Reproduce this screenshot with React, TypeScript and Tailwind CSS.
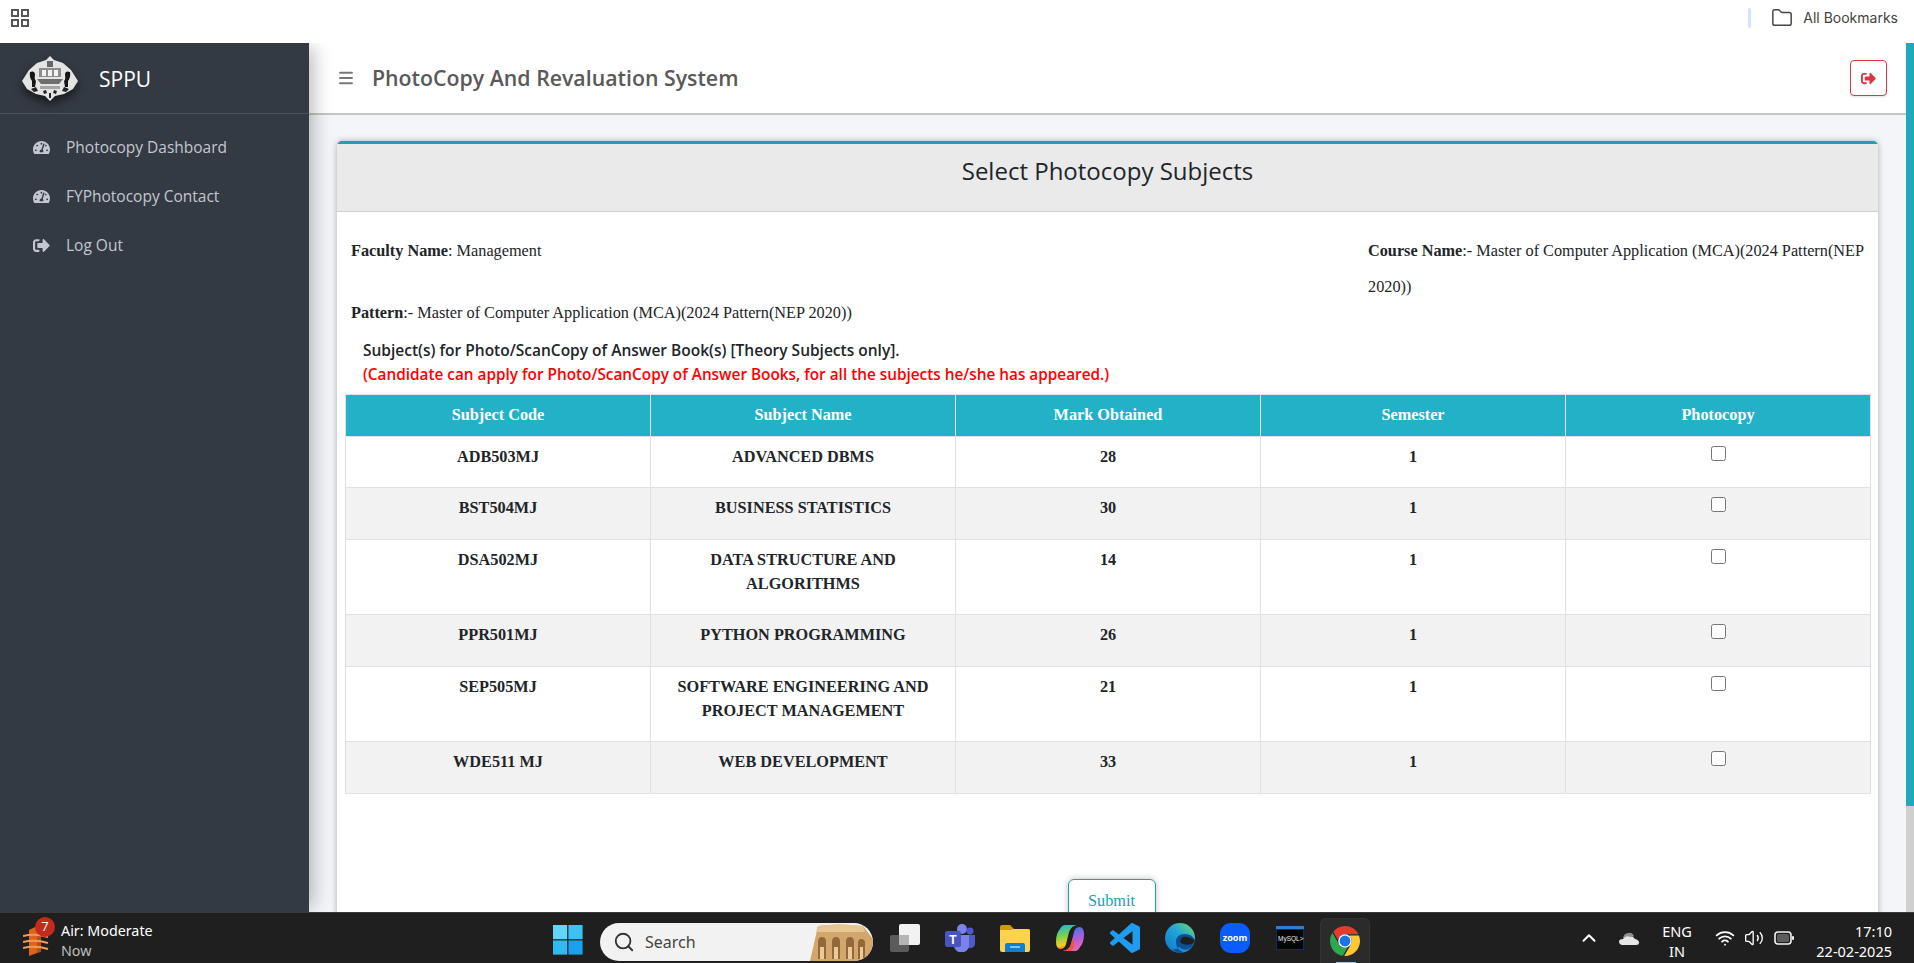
import { Folder, Menu, ChevronUp, Wifi, Volume2, Search } from 'lucide-react';
import { FaTachometerAlt, FaSignOutAlt } from 'react-icons/fa';

const subjects = [
  { code: 'ADB503MJ', name: 'ADVANCED DBMS', mark: 28, h: 'h-[51px]' },
  { code: 'BST504MJ', name: 'BUSINESS STATISTICS', mark: 30, h: 'h-[52px]' },
  { code: 'DSA502MJ', name: 'DATA STRUCTURE AND ALGORITHMS', mark: 14, h: 'h-[75px]' },
  { code: 'PPR501MJ', name: 'PYTHON PROGRAMMING', mark: 26, h: 'h-[52px]' },
  { code: 'SEP505MJ', name: 'SOFTWARE ENGINEERING AND PROJECT MANAGEMENT', mark: 21, h: 'h-[75px]' },
  { code: 'WDE511 MJ', name: 'WEB DEVELOPMENT', mark: 33, h: 'h-[52px]' },
];

const navItems = [
  { label: 'Photocopy Dashboard', icon: FaTachometerAlt },
  { label: 'FYPhotocopy Contact', icon: FaTachometerAlt },
  { label: 'Log Out', icon: FaSignOutAlt },
];

function AppsIcon() {
  return (
    <svg width="18" height="18" viewBox="0 0 18 18" fill="none" stroke="#555" strokeWidth="2">
      <rect x="1" y="1" width="6" height="6" />
      <rect x="11" y="1" width="6" height="6" />
      <rect x="1" y="11" width="6" height="6" />
      <rect x="11" y="11" width="6" height="6" />
    </svg>
  );
}

function Crest() {
  return (
    <svg width="58" height="47" viewBox="0 0 58 47" className="drop-shadow-[0_5px_5px_rgba(0,0,0,0.55)]">
      <path d="M29 1 L33 5 L42 8 L50 15 L57 26 L52 34 L43 39 L34 41 L29 46 L24 41 L15 39 L6 34 L1 26 L8 15 L16 8 L25 5 Z" fill="#e4e4e4" />
      <path d="M18 13 H40 V22 H18 Z" fill="#8d8d8d" />
      <path d="M21 15 h4 v6 h-4z M27 15 h4 v6 h-4z M33 15 h4 v6 h-4z" fill="#f3f3f3" />
      <path d="M26 6 h6 v6 h-6z" fill="#666" />
      <path d="M9 17 q5 -2 5 3 q-1 4 1 6 l-1 6 h-3 l0 -6 q-3 -4 -2 -9z" fill="#151515" />
      <path d="M49 17 q-5 -2 -5 3 q1 4 -1 6 l1 6 h3 l0 -6 q3 -4 2 -9z" fill="#151515" />
      <path d="M16 24 H42 L38 29 H20 Z" fill="#6e6e6e" />
      <path d="M19 31 h20 v3 h-20z" fill="#a5a5a5" />
      <path d="M10 34 l5 -2 2 4 -4 1z M48 34 l-5 -2 -2 4 4 1z M22 36 l3 -1 1 3 -3 1z M36 36 l-3 -1 -1 3 3 1z M28 38 h2 v5 h-2z" fill="#222" />
    </svg>
  );
}

function AirIcon() {
  return (
    <div className="relative w-[33px] h-[32px]">
      <svg width="26" height="32" viewBox="0 0 26 32" className="mt-[4px]">
        <path d="M6 4 L14 0 V27 L6 30 Z" fill="#d9641a" />
        <path d="M14 2 L18 6 V26 L14 27 Z" fill="#b84f10" />
        <path d="M0 10 Q12 7 25 11 M0 16 Q12 13 25 17 M0 22 Q12 19 25 23" stroke="#f29a58" strokeWidth="2" fill="none" />
      </svg>
      <span className="absolute left-[12px] -top-[5px] w-[20px] h-[20px] rounded-full bg-[#c42b1c] text-[13px] flex items-center justify-center">7</span>
    </div>
  );
}

function StartIcon() {
  return (
    <svg width="30" height="30" viewBox="0 0 30 30" className="mt-[3px]">
      <rect x="0" y="0" width="14.2" height="14.2" fill="#63d6f8" />
      <rect x="15.4" y="0" width="14.2" height="14.2" fill="#3dc0f4" />
      <rect x="0" y="15.4" width="14.2" height="14.2" fill="#33b8f2" />
      <rect x="15.4" y="15.4" width="14.2" height="14.2" fill="#1ba0ec" />
    </svg>
  );
}

function Temple() {
  return (
    <svg width="65" height="38" viewBox="0 0 65 38">
      <path d="M2 38 L10 3 Q30 0 55 3 L65 16 V38 Z" fill="#d2a66c" />
      <path d="M10 3 Q30 0 55 3 L57 9 H8 Z" fill="#e8c693" />
      <path d="M10 36 V19 q0 -5 4 -5 q4 0 4 5 V36z M24 36 V19 q0 -5 4 -5 q4 0 4 5 V36z M38 36 V19 q0 -5 4 -5 q4 0 4 5 V36z M50 36 V20 q0 -4 3 -4 q4 0 4 4 V36z" fill="#93683a" />
      <path d="M12 24 h4 v12 h-4z M26 24 h4 v12 h-4z M40 24 h4 v12 h-4z M52 24 h3 v12 h-3z" fill="#ecca98" />
    </svg>
  );
}

function TaskView() {
  return (
    <svg width="30" height="28" viewBox="0 0 30 28">
      <rect x="0" y="11" width="19" height="17" rx="2" fill="#5b5b5b" />
      <rect x="9" y="0" width="21" height="21" rx="2" fill="#f2f2f2" />
      <rect x="9" y="11" width="10" height="10" fill="#b5b5b5" />
    </svg>
  );
}

function Teams() {
  return (
    <svg width="30" height="28" viewBox="0 0 30 28">
      <circle cx="17" cy="5" r="5" fill="#7b83eb" />
      <circle cx="25" cy="7" r="3.5" fill="#5059c9" />
      <path d="M21 11 h9 v9 a5 5 0 0 1 -9 2z" fill="#5059c9" />
      <path d="M9 11 h15 v11 a7 6 0 0 1 -15 0z" fill="#7b83eb" />
      <rect x="0" y="7" width="16" height="16" rx="2" fill="#4b53bc" />
      <text x="8" y="20" textAnchor="middle" fontSize="12" fontWeight="700" fill="#fff" fontFamily="Liberation Sans">T</text>
    </svg>
  );
}

function FolderApp() {
  return (
    <svg width="30" height="27" viewBox="0 0 30 27">
      <path d="M0 2 a2 2 0 0 1 2 -2 h8 l4 4 h14 a2 2 0 0 1 2 2 v2 H0z" fill="#d19a08" />
      <path d="M0 5 h11 l3 -1 h14 a2 2 0 0 1 2 2 v19 a2 2 0 0 1 -2 2 H2 a2 2 0 0 1 -2 -2z" fill="#fcd34f" />
      <path d="M5 27 v-7 a2 2 0 0 1 2 -2 h16 a2 2 0 0 1 2 2 v7z" fill="#0f7fd0" />
      <rect x="10" y="21" width="10" height="2" fill="#7cc4f2" />
    </svg>
  );
}

function Copilot() {
  return (
    <svg width="28" height="28" viewBox="0 0 28 28">
      <defs>
        <linearGradient id="copL" x1="0.3" y1="0" x2="0.5" y2="1">
          <stop offset="0" stopColor="#27b6d8" />
          <stop offset="0.45" stopColor="#7fd04a" />
          <stop offset="0.8" stopColor="#f7c928" />
          <stop offset="1" stopColor="#f0732b" />
        </linearGradient>
        <linearGradient id="copR" x1="0.3" y1="0" x2="0.7" y2="1">
          <stop offset="0" stopColor="#1f7fe0" />
          <stop offset="0.5" stopColor="#a65ee0" />
          <stop offset="1" stopColor="#f268a8" />
        </linearGradient>
      </defs>
      <path d="M9 1 H21 Q15 2 13 8 L10 20 Q9 25 4 25 Q0 24 0 18 Q0 9 4 5 Q6 1 9 1z" fill="url(#copL)" />
      <path d="M19 27 H7 Q13 26 15 20 L18 8 Q19 3 24 3 Q28 4 28 10 Q28 19 24 23 Q22 27 19 27z" fill="url(#copR)" />
      <path d="M7 27 Q13 26 15 20 L17 13 Q20 24 15 27z" fill="#f0553f" />
    </svg>
  );
}

function VsCode() {
  return (
    <svg width="30" height="30" viewBox="0 0 24 24">
      <path
        fill="#1f9cf0"
        d="M23.15 2.587L18.21.21a1.494 1.494 0 0 0-1.705.29l-9.46 8.63-4.12-3.128a.999.999 0 0 0-1.276.057L.327 7.261A1 1 0 0 0 .326 8.74L3.899 12 .326 15.26a1 1 0 0 0 .001 1.479L1.65 17.94a.999.999 0 0 0 1.276.057l4.12-3.128 9.46 8.63a1.492 1.492 0 0 0 1.704.29l4.942-2.377A1.5 1.5 0 0 0 24 20.06V3.939a1.5 1.5 0 0 0-.85-1.352zm-5.146 14.861L10.826 12l7.178-5.448v10.896z"
      />
    </svg>
  );
}

function Edge() {
  return (
    <svg width="30" height="30" viewBox="0 0 30 30">
      <defs>
        <linearGradient id="edgeBg" x1="0" y1="1" x2="1" y2="0">
          <stop offset="0" stopColor="#1273c8" />
          <stop offset="0.55" stopColor="#22a5d8" />
          <stop offset="1" stopColor="#6fdc6a" />
        </linearGradient>
      </defs>
      <circle cx="15" cy="15" r="15" fill="url(#edgeBg)" />
      <path d="M30 17 Q27 11 20 11 Q11 11 11 19 Q11 27 20 30 Q10 31 5 24 Q9 29 14 24 Q18 28 24 26 Q29 23 30 17z" fill="#0c4f94" />
      <path d="M30 18 Q24 13 18 14 Q14 16 16 20 Q20 23 27 21z" fill="#1f1f1f" />
    </svg>
  );
}

function ZoomApp() {
  return (
    <svg width="30" height="30" viewBox="0 0 30 30">
      <rect width="30" height="30" rx="11" fill="#0b5cff" />
      <text x="15" y="18" textAnchor="middle" fontSize="9" fontWeight="700" fill="#fff" fontFamily="Noto Sans">zoom</text>
    </svg>
  );
}

function MySql() {
  return (
    <svg width="28" height="24" viewBox="0 0 28 24">
      <rect width="28" height="24" fill="#0f2f5c" />
      <rect x="0" y="0" width="28" height="3" fill="#2f7fd0" />
      <rect x="1" y="4" width="26" height="19" fill="#050505" />
      <text x="2" y="15" fontSize="6.5" fill="#e8e8e8" fontFamily="Liberation Sans">MySQL&gt;</text>
    </svg>
  );
}

function Chrome() {
  return (
    <svg width="30" height="30" viewBox="0 0 24 24">
      <path fill="#e33b2e" d="M12 0C8.21 0 4.831 1.757 2.632 4.501l3.953 6.848A5.454 5.454 0 0 1 12 6.545h10.691A12 12 0 0 0 12 0z" />
      <path fill="#2fa84f" d="M1.931 5.47A11.943 11.943 0 0 0 0 12c0 6.012 4.42 10.991 10.189 11.864l3.953-6.847a5.45 5.45 0 0 1-6.865-2.29z" />
      <path fill="#fcc934" d="M15.273 7.636a5.446 5.446 0 0 1 1.45 7.09l.002.001h-.002l-5.344 9.257c.206.01.413.016.621.016 6.627 0 12-5.373 12-12 0-1.54-.29-3.011-.818-4.364z" />
      <circle cx="12" cy="12" r="5.4" fill="#fff" />
      <circle cx="12" cy="12" r="4.364" fill="#1a73e8" />
    </svg>
  );
}

function CloudIcon() {
  return (
    <svg width="20" height="13" viewBox="0 0 20 13">
      <path d="M4 6 Q5 1 10 1 Q13 0 15 4 L9 8z" fill="#8f8f8f" />
      <path d="M3 13 Q0 12 0 9.5 Q0 7 4 7 Q7 3 11 5 Q14 4 16 7 Q20 8 20 10.5 Q20 13 17 13z" fill="#e6e6e6" />
    </svg>
  );
}

function BatteryIcon() {
  return (
    <svg width="20" height="14" viewBox="0 0 20 14">
      <rect x="1" y="1" width="16" height="12" rx="3" fill="none" stroke="#f2f2f2" strokeWidth="1.6" />
      <rect x="3" y="3" width="12" height="8" rx="1.5" fill="#cfcfcf" opacity="0.35" />
      <rect x="18" y="5" width="2" height="4" rx="1" fill="#f2f2f2" />
    </svg>
  );
}

const taskApps = [TaskView, Teams, FolderApp, Copilot, VsCode, Edge, ZoomApp, MySql];

export default function App() {
  return (
    <div className="w-[1914px] h-[963px] overflow-hidden flex flex-col bg-white font-['Open_Sans',sans-serif]">
      <div className="relative z-20 bg-white h-[43px] shrink-0 flex items-center justify-between pl-[11px] pr-[16px] pb-[8px]">
        <AppsIcon />
        <div className="flex items-center">
          <div className="w-[3px] h-[20px] bg-[#d3e3fd] rounded mr-[20px]" />
          <Folder size={22} strokeWidth={1.6} className="text-[#444] mr-[10px]" />
          <span className="text-[14px] text-[#444] font-['Inter',sans-serif]">All Bookmarks</span>
        </div>
      </div>

      <div className="flex-1 flex min-h-0">
        <aside className="relative z-10 w-[309px] shrink-0 bg-[#343a43] text-[#c2c7d0] shadow-[8px_0_18px_-4px_rgba(0,0,0,0.28)]">
          <div className="h-[71px] flex items-center pl-[21px] border-b border-[#4b545c]">
            <Crest />
            <span className="ml-[20px] mt-[4px] text-[21px] text-white">SPPU</span>
          </div>
          <nav className="pt-[9px]">
            {navItems.map((n) => (
              <div key={n.label} className="h-[49px] flex items-center pl-[33px] text-[15.5px]">
                <n.icon size={17} className="mr-[16px]" />
                {n.label}
              </div>
            ))}
          </nav>
        </aside>

        <main className="flex-1 min-w-0 flex flex-col bg-[#f3f5f9] overflow-hidden">
          <header className="h-[72px] shrink-0 bg-white border-b-2 border-[#c4c4c4] flex items-center justify-between pl-[28px] pr-[19px]">
            <div className="flex items-center">
              <Menu size={18} strokeWidth={2.5} className="text-[#777]" />
              <h1 className="ml-[17px] text-[21.3px] font-semibold text-[#595959]">PhotoCopy And Revaluation System</h1>
            </div>
            <button className="w-[37px] h-[36px] border border-[#dc3545] rounded flex items-center justify-center text-[#dc3545] shadow-sm">
              <FaSignOutAlt size={15} />
            </button>
          </header>

          <div className="flex-1 min-h-0 pl-[28px] pr-[28px] pt-[26px]">
            <section className="bg-white border-t-[3px] border-[#17a2b8] rounded-t-[5px] shadow-[0_0_6px_rgba(0,0,0,0.3)] h-[900px]">
              <div className="h-[68px] pb-[14px] bg-[#eaeaea] border-b border-[#d0d0d0] flex items-center justify-center text-[24px] text-[#212529]">
                Select Photocopy Subjects
              </div>
              <div className="pl-[8px] pr-[7px] font-['Liberation_Serif',serif] text-[16.25px] text-[#212529]">
                <div className="flex pl-[6px] pt-[21px]">
                  <div className="w-[1017px] shrink-0 leading-[36px]">
                    <p><b>Faculty Name</b>: Management</p>
                    <p className="mt-[26px]"><b>Pattern</b>:- Master of Computer Application (MCA)(2024 Pattern(NEP 2020))</p>
                  </div>
                  <div className="flex-1 leading-[36px]">
                    <p><b>Course Name</b>:- Master of Computer Application (MCA)(2024 Pattern(NEP</p>
                    <p>2020))</p>
                  </div>
                </div>
                <div className="pl-[18px] mt-[7px] font-['Open_Sans',sans-serif] leading-[24px] font-semibold">
                  <p className="text-[15.5px] text-[#212529]">Subject(s) for Photo/ScanCopy of Answer Book(s) [Theory Subjects only].</p>
                  <p className="text-[15.33px] text-[#ff0000]">(Candidate can apply for Photo/ScanCopy of Answer Books, for all the subjects he/she has appeared.)</p>
                </div>
                <table className="w-full mt-[8px] table-fixed border-collapse text-center">
                  <thead>
                    <tr className="h-[42px] bg-[#23b1c7] text-white">
                      {['Subject Code', 'Subject Name', 'Mark Obtained', 'Semester', 'Photocopy'].map((t) => (
                        <th key={t} className="border border-[#dee2e6] font-bold">{t}</th>
                      ))}
                    </tr>
                  </thead>
                  <tbody className="font-bold">
                    {subjects.map((s, i) => (
                      <tr key={s.code} className={`${s.h} ${i % 2 ? 'bg-[#f2f2f2]' : 'bg-white'}`}>
                        <td className="border border-[#dee2e6] align-top pt-[8px] leading-[24px]">{s.code}</td>
                        <td className="border border-[#dee2e6] align-top pt-[8px] leading-[24px] px-[12px]">{s.name}</td>
                        <td className="border border-[#dee2e6] align-top pt-[8px] leading-[24px]">{s.mark}</td>
                        <td className="border border-[#dee2e6] align-top pt-[8px] leading-[24px]">1</td>
                        <td className="border border-[#dee2e6] align-top pt-[7px] leading-[24px]">
                          <input type="checkbox" className="w-[15px] h-[15px]" />
                        </td>
                      </tr>
                    ))}
                  </tbody>
                </table>
                <div className="flex justify-center mt-[85px] pl-[7px]">
                  <button className="w-[88px] h-[44px] border border-[#17a2b8] rounded-md text-[#17a2b8] shadow-[0_0_6px_rgba(0,0,0,0.25)]">Submit</button>
                </div>
              </div>
            </section>
          </div>
        </main>

        <div className="w-[8px] shrink-0 bg-[#cfcfcf]">
          <div className="h-[763px] bg-[#1fa9bd]" />
        </div>
      </div>

      <footer className="relative z-20 h-[51px] shrink-0 bg-[#1f1f1f] border-t border-[#3a3a3a] flex items-center text-white">
        <div className="w-[553px] shrink-0 flex items-center pl-[23px]">
          <AirIcon />
          <div className="ml-[5px] mt-[6px] text-[14.3px] leading-[20px] font-['Noto_Sans',sans-serif]">
            <div>Air: Moderate</div>
            <div className="text-[#bdbdbd]">Now</div>
          </div>
        </div>
        <StartIcon />
        <div className="ml-[17px] w-[273px] h-[38px] mt-[8px] rounded-full bg-[#f2f2f2] flex items-center pl-[13px] text-[#444] overflow-hidden">
          <Search size={22} strokeWidth={2} className="text-[#333]" />
          <span className="ml-[10px] text-[16px] font-['Noto_Sans',sans-serif]">Search</span>
          <div className="ml-auto">
            <Temple />
          </div>
        </div>
        <div className="ml-[4.5px] flex items-center">
          {taskApps.map((Icon, i) => (
            <div key={i} className="w-[55px] flex justify-center">
              <Icon />
            </div>
          ))}
          <div className="relative ml-[2px] mt-[5px] w-[50px] h-[46px] rounded-t-md bg-[#2b2b2b] border border-[#333] border-b-0 flex items-center justify-center">
            <Chrome />
            <div className="absolute bottom-0 left-[15px] w-[20px] h-[2px] bg-[#8ecbf0]" />
          </div>
        </div>
        <div className="ml-auto flex items-center pr-[22px]">
          <ChevronUp size={22} strokeWidth={2.2} />
          <div className="ml-[19px]"><CloudIcon /></div>
          <div className="ml-[23px] mt-[6px] w-[30px] text-center text-[14.5px] leading-[20px] font-['Noto_Sans',sans-serif]">ENG<br />IN</div>
          <Wifi size={20} strokeWidth={2.2} className="ml-[23px]" />
          <Volume2 size={20} strokeWidth={1.6} className="ml-[9px]" />
          <div className="ml-[10px]"><BatteryIcon /></div>
          <div className="ml-[20px] mt-[6px] w-[78px] text-right text-[14.5px] leading-[20px] font-['Noto_Sans',sans-serif]">
            <div>17:10</div>
            <div>22-02-2025</div>
          </div>
        </div>
      </footer>
    </div>
  );
}
